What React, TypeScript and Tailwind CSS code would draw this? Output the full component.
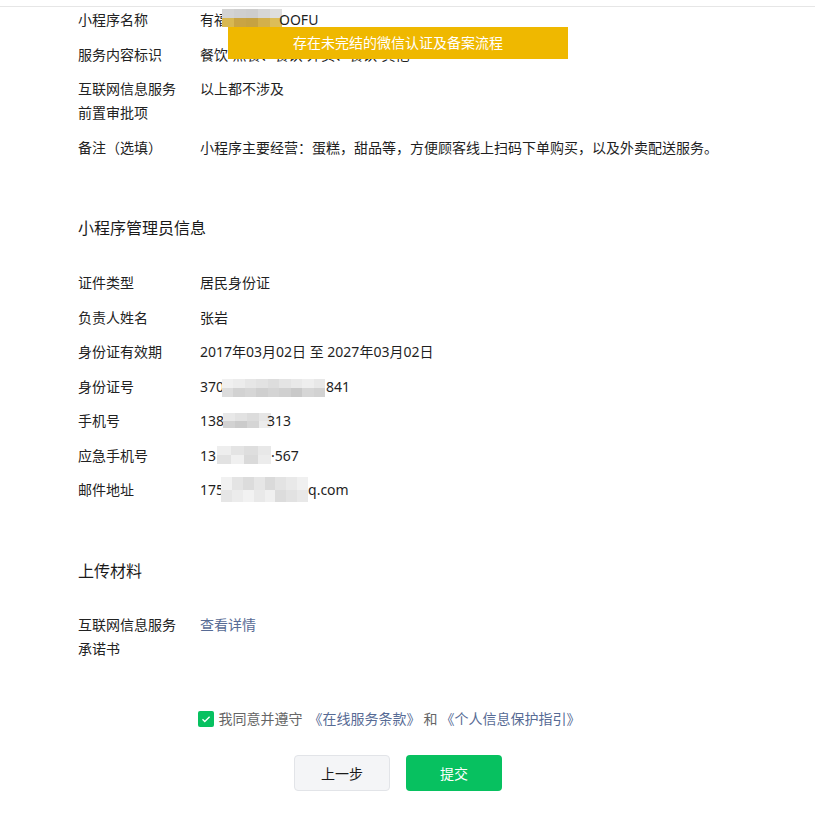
import React from "react";

type MosaicProps = {
  width: number;
  height: number;
  rows: string[][];
  className?: string;
};

// pixelated cover for hidden personal data
function Mosaic({ width, height, rows, className = "" }: MosaicProps) {
  return (
    <span
      className={`inline-flex flex-col shrink-0 ${className}`}
      style={{ width, height }}
    >
      {rows.map((row, i) => (
        <span key={i} className="flex flex-1">
          {row.map((c, j) => (
            <span key={j} className="flex-1" style={{ backgroundColor: c }} />
          ))}
        </span>
      ))}
    </span>
  );
}

function Row({ label, children }: { label: React.ReactNode; children: React.ReactNode }) {
  return (
    <div className="flex leading-[24px]">
      <div className="w-[108px] mr-[14px] shrink-0 text-[#222]">{label}</div>
      <div className="flex-1 flex items-start text-[#1f1f1f]">{children}</div>
    </div>
  );
}

export default function App() {
  return (
    <div className="min-h-screen bg-white text-[14px] font-['Noto_Sans','Noto_Sans_CJK_SC',sans-serif]">
      <div className="h-[7px] border-b border-[#e6e6e6]" />

      <div className="relative w-[796px] pt-[1px] pl-[78px]">
        {/* toast */}
        <div className="absolute left-[228px] top-[20px] w-[340px] h-[32px] bg-[#efb800] text-white flex items-center justify-center leading-[24px]">
          存在未完结的微信认证及备案流程
        </div>

        <div className="flex flex-col gap-[10.5px]">
          <Row label="小程序名称">
            <span>有福</span>
            <Mosaic
              width={60}
              height={18}
              className="mt-[1px] ml-[-6px]"
              rows={[
                ["#d3d3d3", "#cfcfcf", "#cdcdcd", "#d6d6d6", "#dedede"],
                ["#d8b852", "#c9a444", "#c6a242", "#d3b04c", "#dcbd58"],
              ]}
            />
            <span className="ml-[-3px]">OOFU</span>
          </Row>
          <Row label="服务内容标识">餐饮-点餐、餐饮-外卖、餐饮-其他</Row>
          <Row label="互联网信息服务前置审批项">以上都不涉及</Row>
          <Row label="备注（选填）">
            小程序主要经营：蛋糕，甜品等，方便顾客线上扫码下单购买，以及外卖配送服务。
          </Row>
        </div>

        <h2 className="mt-[56.5px] mb-[31px] text-[16px] leading-[24px] text-[#1a1a1a] font-normal">
          小程序管理员信息
        </h2>

        <div className="flex flex-col gap-[10.5px]">
          <Row label="证件类型">居民身份证</Row>
          <Row label="负责人姓名">张岩</Row>
          <Row label="身份证有效期">2017年03月02日 至 2027年03月02日</Row>
          <Row label="身份证号">
            <span>370</span>
            <Mosaic
              width={103}
              height={18}
              className="mt-[4px] ml-[-2px]"
              rows={[
                ["#f0f0f0", "#ececec", "#e6e6e6", "#e2e2e2", "#dddddd", "#e4e4e4", "#e9e9e9", "#eeeeee", "#e8e8e8"],
                ["#dcdcdc", "#d2d2d2", "#d6d6d6", "#cfcfcf", "#d4d4d4", "#d0d0d0", "#c9c9c9", "#d6d6d6", "#d2d2d2"],
              ]}
            />
            <span className="ml-[1px]">841</span>
          </Row>
          <Row label="手机号">
            <span>138</span>
            <Mosaic
              width={48}
              height={15}
              className="mt-[4px] ml-[-1px]"
              rows={[
                ["#e8e8e8", "#e2e2e2", "#dcdcdc", "#e6e6e6"],
                ["#d2d2d2", "#cbcbcb", "#d5d5d5", "#ececec"],
              ]}
            />
            <span className="ml-[-4px]">313</span>
          </Row>
          <Row label="应急手机号">
            <span>13</span>
            <Mosaic
              width={54}
              height={18}
              className="mt-[2px] ml-[1px]"
              rows={[
                ["#eeeeee", "#e4e4e4", "#dedede", "#e8e8e8"],
                ["#e2e2e2", "#f0f0f0", "#dadada", "#ececec"],
              ]}
            />
            <span>·567</span>
          </Row>
          <Row label="邮件地址">
            <span>175</span>
            <Mosaic
              width={87}
              height={25}
              className="mt-[-1px] ml-[-3px]"
              rows={[
                ["#f1f1f1", "#e4e4e4", "#dcdcdc", "#e6e6e6", "#dadada", "#e3e3e3", "#e9e9e9", "#f0f0f0"],
                ["#e6e6e6", "#ececec", "#f2f2f2", "#e9e9e9", "#f0f0f0", "#dcdcdc", "#e2e2e2", "#e8e8e8"],
              ]}
            />
            <span>q.com</span>
          </Row>
        </div>

        <h2 className="mt-[57px] mb-[30px] text-[16px] leading-[24px] text-[#1a1a1a] font-normal">
          上传材料
        </h2>

        <Row label="互联网信息服务承诺书">
          <a href="#" className="text-[#576b95]">
            查看详情
          </a>
        </Row>
      </div>

      <div className="w-[796px] flex flex-col items-center">
        <label className="mt-[46px] flex items-center leading-[24px] text-[#666] pr-[18px]">
          <span className="w-[16px] h-[16px] rounded-[2px] bg-[#07c160] flex items-center justify-center mr-[5px]">
            <svg width="12" height="12" viewBox="0 0 12 12" fill="none">
              <path d="M2.5 6.2l2.3 2.3L9.6 3.7" stroke="#fff" strokeWidth="1.3" />
            </svg>
          </span>
          <span>我同意并遵守</span>
          <a href="#" className="text-[#576b95] ml-[6px]">《在线服务条款》</a>
          <span className="ml-[3px] mr-[3px]">和</span>
          <a href="#" className="text-[#576b95]">《个人信息保护指引》</a>
        </label>

        <div className="mt-[24px] flex gap-[16px]">
          <button className="w-[96px] h-[36px] rounded-[4px] border border-[#e2e4e8] bg-[#f4f5f7] text-[#1a1a1a]">
            上一步
          </button>
          <button className="w-[96px] h-[36px] rounded-[4px] bg-[#07c160] text-white">
            提交
          </button>
        </div>
      </div>
    </div>
  );
}
